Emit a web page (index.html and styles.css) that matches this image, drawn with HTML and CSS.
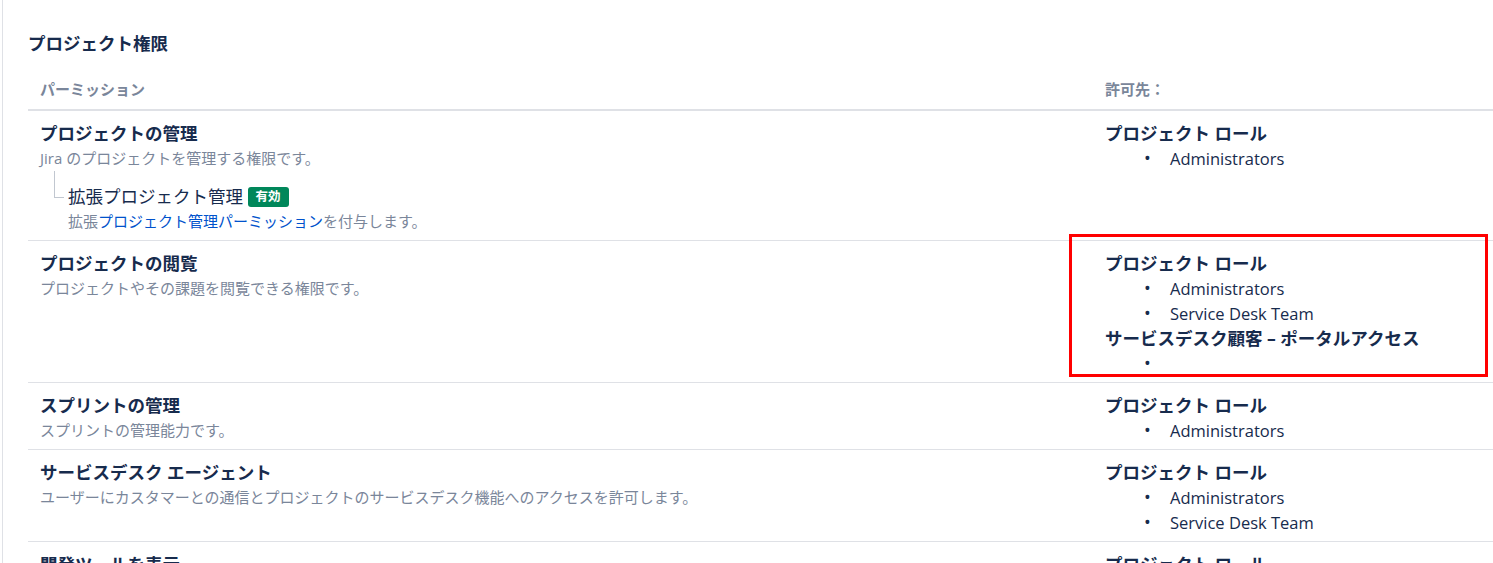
FILE: index.html
```html
<!DOCTYPE html>
<html lang="ja">
<head>
    <meta charset="UTF-8">
    <title>プロジェクト権限</title>
    <link rel="stylesheet" href="styles.css">
</head>
<body>

    <div class="page">
        <h2 class="section-title">プロジェクト権限</h2>

        <div class="perm-table">
            <div class="cell head">パーミッション</div>
            <div class="cell head">許可先：</div>

            <!-- プロジェクトの管理 -->
            <div class="cell">
                <div class="perm-name">プロジェクトの管理</div>
                <div class="perm-desc">Jira のプロジェクトを管理する権限です。</div>
                <div class="sub-perm">
                    <div class="sub-name">拡張プロジェクト管理 <span class="badge">有効</span></div>
                    <div class="perm-desc">拡張<a href="#">プロジェクト管理パーミッション</a>を付与します。</div>
                </div>
            </div>
            <div class="cell">
                <div class="grant-type">プロジェクト ロール</div>
                <ul class="grant-list">
                    <li>Administrators</li>
                </ul>
            </div>

            <!-- プロジェクトの閲覧 -->
            <div class="cell">
                <div class="perm-name">プロジェクトの閲覧</div>
                <div class="perm-desc">プロジェクトやその課題を閲覧できる権限です。</div>
            </div>
            <div class="cell highlighted">
                <div class="grant-type">プロジェクト ロール</div>
                <ul class="grant-list">
                    <li>Administrators</li>
                    <li>Service Desk Team</li>
                </ul>
                <div class="grant-type">サービスデスク顧客 – ポータルアクセス</div>
                <ul class="grant-list">
                    <li></li>
                </ul>
            </div>

            <!-- スプリントの管理 -->
            <div class="cell">
                <div class="perm-name">スプリントの管理</div>
                <div class="perm-desc">スプリントの管理能力です。</div>
            </div>
            <div class="cell">
                <div class="grant-type">プロジェクト ロール</div>
                <ul class="grant-list">
                    <li>Administrators</li>
                </ul>
            </div>

            <!-- サービスデスク エージェント -->
            <div class="cell">
                <div class="perm-name">サービスデスク エージェント</div>
                <div class="perm-desc">ユーザーにカスタマーとの通信とプロジェクトのサービスデスク機能へのアクセスを許可します。</div>
            </div>
            <div class="cell">
                <div class="grant-type">プロジェクト ロール</div>
                <ul class="grant-list">
                    <li>Administrators</li>
                    <li>Service Desk Team</li>
                </ul>
            </div>

            <!-- 開発ツールを表示 -->
            <div class="cell">
                <div class="perm-name">開発ツールを表示</div>
                <div class="perm-desc">開発ツールの情報を表示できる権限です。</div>
            </div>
            <div class="cell">
                <div class="grant-type">プロジェクト ロール</div>
                <ul class="grant-list">
                    <li>Administrators</li>
                </ul>
            </div>
        </div>
    </div>

</body>
</html>
```

FILE: styles.css
```css
body {
    margin: 0;
    padding: 0;
    background: #ffffff;
    color: #172b4d;
    font-family: "Open Sans", "Noto Sans CJK JP", sans-serif;
    overflow: hidden;
}
.page {
    margin-left: 2px;
    border-left: 1px solid #dfe1e6;
    padding: 31px 0 0 25px;
    min-height: 600px;
}
.section-title {
    margin: 0;
    font-size: 17.5px;
    line-height: 25px;
    font-weight: bold;
    color: #172b4d;
}
.perm-table {
    display: grid;
    grid-template-columns: 1065px 1fr;
}
.cell {
    padding: 10px 12px 6px 12px;
    border-bottom: 1px solid #dfe1e6;
    line-height: 25px;
}
.cell.head {
    padding: 21px 12px 7px 12px;
    border-bottom: 2px solid #dfe1e6;
    font-size: 15px;
    font-weight: bold;
    color: #7a869a;
}
.cell.highlighted {
    position: relative;
}
/* 赤枠の注釈 */
.cell.highlighted::after {
    content: "";
    position: absolute;
    left: -24px;
    top: -7px;
    width: 413px;
    height: 137px;
    border: 3px solid #ff0000;
}
.perm-name {
    font-size: 17.5px;
    font-weight: bold;
    color: #172b4d;
}
.perm-desc {
    font-size: 15px;
    color: #7a869a;
}
.perm-desc a {
    color: #0052cc;
    text-decoration: none;
}
.sub-perm {
    position: relative;
    margin-top: 13px;
    padding-left: 28px;
}
.sub-perm::before {
    content: "";
    position: absolute;
    left: 14px;
    top: -13px;
    width: 9px;
    height: 26px;
    border-left: 1px solid #c1c7d0;
    border-bottom: 1px solid #c1c7d0;
}
.sub-name {
    font-size: 17.5px;
    color: #172b4d;
}
.badge {
    display: inline-block;
    background: #00875a;
    color: white;
    font-size: 12.5px;
    font-weight: bold;
    line-height: 20px;
    padding: 0 8px;
    border-radius: 3px;
    vertical-align: 2px;
}
.grant-type {
    font-size: 17.5px;
    font-weight: bold;
    color: #172b4d;
}
.grant-list {
    list-style: none;
    margin: 0;
    padding: 0 0 0 39px;
}
.grant-list li {
    font-size: 16.5px;
    min-height: 25px;
    color: #172b4d;
}
.grant-list li::before {
    content: "•";
    display: inline-block;
    width: 26px;
    font-size: 18px;
}
```
